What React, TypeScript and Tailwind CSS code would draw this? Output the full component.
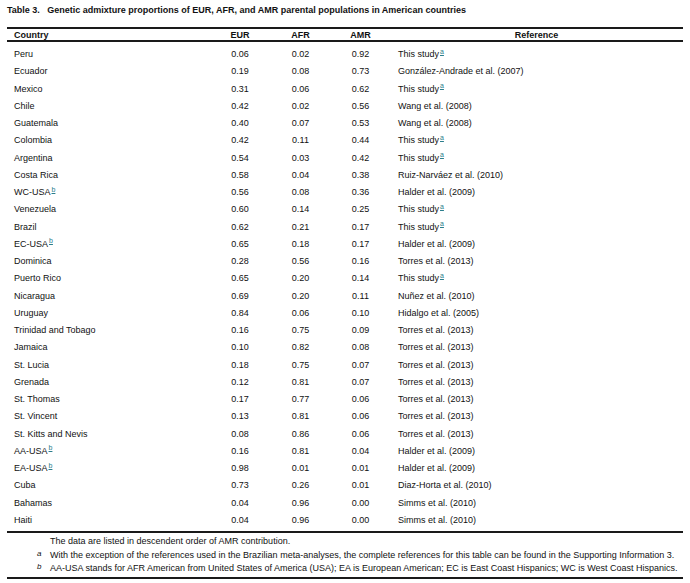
const rows: [string, string, string, string, string, string?][] = [
  ['Peru', '0.06', '0.02', '0.92', 'This study', 'a'],
  ['Ecuador', '0.19', '0.08', '0.73', 'González-Andrade et al. (2007)'],
  ['Mexico', '0.31', '0.06', '0.62', 'This study', 'a'],
  ['Chile', '0.42', '0.02', '0.56', 'Wang et al. (2008)'],
  ['Guatemala', '0.40', '0.07', '0.53', 'Wang et al. (2008)'],
  ['Colombia', '0.42', '0.11', '0.44', 'This study', 'a'],
  ['Argentina', '0.54', '0.03', '0.42', 'This study', 'a'],
  ['Costa Rica', '0.58', '0.04', '0.38', 'Ruiz-Narváez et al. (2010)'],
  ['WC-USA|b', '0.56', '0.08', '0.36', 'Halder et al. (2009)'],
  ['Venezuela', '0.60', '0.14', '0.25', 'This study', 'a'],
  ['Brazil', '0.62', '0.21', '0.17', 'This study', 'a'],
  ['EC-USA|b', '0.65', '0.18', '0.17', 'Halder et al. (2009)'],
  ['Dominica', '0.28', '0.56', '0.16', 'Torres et al. (2013)'],
  ['Puerto Rico', '0.65', '0.20', '0.14', 'This study', 'a'],
  ['Nicaragua', '0.69', '0.20', '0.11', 'Nuñez et al. (2010)'],
  ['Uruguay', '0.84', '0.06', '0.10', 'Hidalgo et al. (2005)'],
  ['Trinidad and Tobago', '0.16', '0.75', '0.09', 'Torres et al. (2013)'],
  ['Jamaica', '0.10', '0.82', '0.08', 'Torres et al. (2013)'],
  ['St. Lucia', '0.18', '0.75', '0.07', 'Torres et al. (2013)'],
  ['Grenada', '0.12', '0.81', '0.07', 'Torres et al. (2013)'],
  ['St. Thomas', '0.17', '0.77', '0.06', 'Torres et al. (2013)'],
  ['St. Vincent', '0.13', '0.81', '0.06', 'Torres et al. (2013)'],
  ['St. Kitts and Nevis', '0.08', '0.86', '0.06', 'Torres et al. (2013)'],
  ['AA-USA|b', '0.16', '0.81', '0.04', 'Halder et al. (2009)'],
  ['EA-USA|b', '0.98', '0.01', '0.01', 'Halder et al. (2009)'],
  ['Cuba', '0.73', '0.26', '0.01', 'Diaz-Horta et al. (2010)'],
  ['Bahamas', '0.04', '0.96', '0.00', 'Simms et al. (2010)'],
  ['Haiti', '0.04', '0.96', '0.00', 'Simms et al. (2010)'],
]

const cols = 'grid grid-cols-[203px_60px_61px_59px_1fr]'

function Note({ mark }: { mark: string }) {
  return <sup className="ml-px text-[7px] text-[#2a7d8c] underline">{mark}</sup>
}

export default function App() {
  return (
    <div className="w-[690px] h-[583px] bg-white pt-[4px] pl-[7px] text-[9px] leading-[13px] text-[#111] font-['Liberation_Sans',Arial,sans-serif]">
      <div className="w-[676px]">
        {/* Title */}
        <h1 className="font-bold">Table 3.&nbsp;&nbsp; Genetic admixture proportions of EUR, AFR, and AMR parental populations in American countries</h1>

        {/* Header */}
        <div className={`${cols} mt-[10px] border-y-2 border-[#1a1a1a] font-bold h-[15px] items-center`}>
          <div className="pl-[7px]">Country</div>
          <div className="text-center">EUR</div>
          <div className="text-center">AFR</div>
          <div className="text-center">AMR</div>
          <div className="text-center">Reference</div>
        </div>

        {/* Body */}
        <div className="pt-[4px] pb-[2px] border-b-2 border-[#1a1a1a]">
          {rows.map(([country, eur, afr, amr, ref, mark]) => {
            const [name, cmark] = country.split('|')
            return (
              <div key={name} className={`${cols} h-[17.25px] items-center`}>
                <div className="pl-[7px]">
                  {name}
                  {cmark && <Note mark={cmark} />}
                </div>
                <div className="text-center">{eur}</div>
                <div className="text-center">{afr}</div>
                <div className="text-center">{amr}</div>
                <div className="pl-[8px]">
                  {ref}
                  {mark && <Note mark={mark} />}
                </div>
              </div>
            )
          })}
        </div>

        {/* Footnotes */}
        <div className="pt-[2px] pb-[1px] border-b-2 border-[#1a1a1a] leading-[13.5px]">
          <div className="flex">
            <span className="w-[43px]" />
            <span>The data are listed in descendent order of AMR contribution.</span>
          </div>
          <div className="flex">
            <span className="w-[43px] pl-[30px] italic text-[8px] -translate-y-[2px]">a</span>
            <span>With the exception of the references used in the Brazilian meta-analyses, the complete references for this table can be found in the Supporting Information 3.</span>
          </div>
          <div className="flex">
            <span className="w-[43px] pl-[30px] italic text-[8px] -translate-y-[2px]">b</span>
            <span>AA-USA stands for AFR American from United States of America (USA); EA is European American; EC is East Coast Hispanics; WC is West Coast Hispanics.</span>
          </div>
        </div>
      </div>
    </div>
  )
}
